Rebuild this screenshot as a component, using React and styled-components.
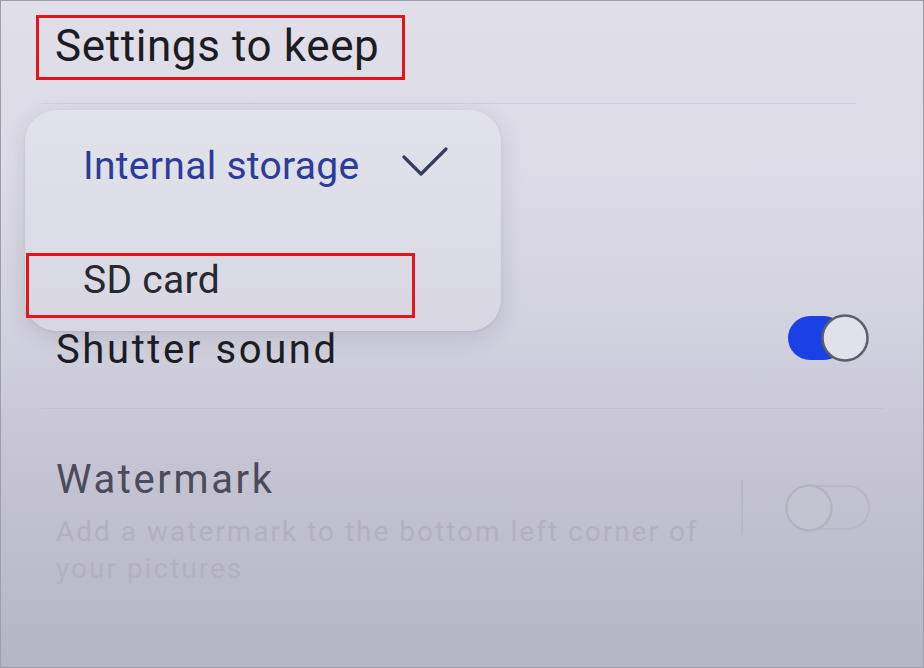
import React from "react";
import styled, { createGlobalStyle } from "styled-components";

const GlobalStyle = createGlobalStyle`
  html, body {
    margin: 0;
    padding: 0;
    background: #ffffff;
  }
  body {
    font-family: Roboto, "Noto Sans", "Liberation Sans", sans-serif;
  }
`;

const Frame = styled.div`
  position: relative;
  width: 924px;
  height: 668px;
  box-sizing: border-box;
  border: 1px solid #9e9ea8;
  overflow: hidden;
  background: linear-gradient(
    180deg,
    #e0dfe9 0%,
    #dcdbe6 25%,
    #d2d1de 50%,
    #c8c6d4 65%,
    #bfbecd 82%,
    #b5b4c3 100%
  );
`;

const Header = styled.div`
  height: 102px;
  box-sizing: border-box;
  padding: 14px 0 0 35px;
`;

// red annotation box drawn on the screenshot
const Mark = styled.div`
  box-sizing: border-box;
  width: ${(p) => p.$w}px;
  height: 65px;
  border: 3px solid #e2141c;
  padding: ${(p) => p.$pt}px 0 0 ${(p) => p.$pl}px;
  margin-left: ${(p) => p.$ml || 0}px;
`;

const Title = styled.div`
  font-size: 44px;
  line-height: 52px;
  color: #1c1c22;
  letter-spacing: 0.6px;
`;

const Divider = styled.div`
  height: 1px;
  margin: 0 ${(p) => p.$mr}px 0 ${(p) => p.$ml}px;
  background: ${(p) => p.$c};
`;

const List = styled.div`
  padding: 0 52px 0 55px;
`;

const Row = styled.div`
  display: flex;
  align-items: flex-start;
  box-sizing: border-box;
  padding-top: ${(p) => p.$pt}px;
  padding-bottom: ${(p) => p.$pb}px;
`;

const TextCol = styled.div`
  flex: 1;
  min-width: 0;
  padding-right: 30px;
`;

const Label = styled.div`
  font-size: 40px;
  line-height: 47px;
  color: ${(p) => p.$c};
  letter-spacing: 2.6px;
`;

const Sub = styled.div`
  font-size: 28px;
  line-height: 37px;
  color: #b3b1c0;
  letter-spacing: 2px;
  margin-top: 10px;
`;

const Right = styled.div`
  display: flex;
  align-items: center;
  margin-top: ${(p) => p.$mt}px;
  margin-left: auto;
`;

const VLine = styled.div`
  width: 2px;
  height: 55px;
  background: #b7b6c3;
  margin-right: 42px;
`;

const Menu = styled.div`
  position: absolute;
  left: 24px;
  top: 109px;
  width: 476px;
  height: 221px;
  box-sizing: border-box;
  border-radius: 32px;
  background: linear-gradient(180deg, #e2e2eb 0%, #dcdce6 60%, #d7d6e1 100%);
  box-shadow: 0 6px 22px rgba(60, 60, 90, 0.16), 0 1px 3px rgba(60, 60, 90, 0.08);
  padding-top: 33px;
`;

const MenuItem = styled.div`
  display: flex;
  align-items: flex-start;
  padding: 0 53px 0 58px;
`;

const Option = styled.div`
  font-size: 39px;
  line-height: 47px;
  color: ${(p) => p.$c};
  letter-spacing: 0.3px;
`;

const Check = styled.svg`
  margin-left: auto;
  margin-top: 4px;
  display: block;
`;

const SdWrap = styled.div`
  margin-top: 63px;
`;

const ToggleOn = () => (
  <svg width="84" height="50" viewBox="0 0 84 50" style={{ display: "block" }}>
    <rect x="1" y="3" width="58" height="44" rx="22" fill="#1a41e3" />
    <circle cx="58" cy="25" r="22.5" fill="#e1e1ea" stroke="#5c5e6a" strokeWidth="2.5" />
  </svg>
);

const ToggleOff = () => (
  <svg width="86" height="50" viewBox="0 0 86 50" style={{ display: "block" }}>
    <rect x="2" y="3" width="82" height="43" rx="21.5" fill="none" stroke="#b9b8c4" strokeWidth="2.2" />
    <circle cx="24" cy="25" r="22.5" fill="#c4c3d0" stroke="#b4b3c0" strokeWidth="2.4" />
  </svg>
);

export default function App() {
  return (
    <>
      <GlobalStyle />
      <Frame>
        <Header>
          <Mark $w={369} $pt={2} $pl={16}>
            <Title>Settings to keep</Title>
          </Mark>
        </Header>
        <Divider $ml={40} $mr={67} $c="rgba(205, 204, 216, 0.9)" />

        <List>
          <Row $pt={222} $pb={35}>
            <TextCol>
              <Label $c="#1d1d23">Shutter sound</Label>
            </TextCol>
            <Right $mt={-13}>
              <ToggleOn />
            </Right>
          </Row>
        </List>
        <Divider $ml={40} $mr={40} $c="rgba(190, 188, 204, 0.6)" />
        <List>
          <Row $pt={47} $pb={0}>
            <TextCol>
              <Label $c="#4b4b59">Watermark</Label>
              <Sub>Add a watermark to the bottom left corner of your pictures</Sub>
            </TextCol>
            <Right $mt={24}>
              <VLine />
              <ToggleOff />
            </Right>
          </Row>
        </List>

        <Menu>
          <MenuItem>
            <Option $c="#2c3c98">Internal storage</Option>
            <Check width="46" height="30" viewBox="0 0 46 30">
              <polyline
                points="2,10 19,27 44,2"
                fill="none"
                stroke="#373b5e"
                strokeWidth="3.2"
                strokeLinecap="round"
                strokeLinejoin="round"
              />
            </Check>
          </MenuItem>
          <SdWrap>
            <Mark $w={389} $pt={1} $pl={54} $ml={1}>
              <Option $c="#28282f">SD card</Option>
            </Mark>
          </SdWrap>
        </Menu>
      </Frame>
    </>
  );
}
